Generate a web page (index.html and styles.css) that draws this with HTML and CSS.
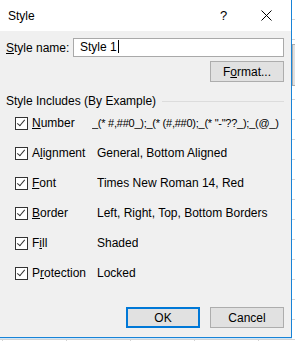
FILE: index.html
```html
<!DOCTYPE html>
<html lang="en">

<head>
    <meta charset="UTF-8">
    <meta name="viewport" content="width=device-width, initial-scale=1.0">
    <title>Style</title>
    <link rel="stylesheet" href="styles.css">
</head>

<body>
    <div class="sheet">
        <div class="peek"></div>
    </div>

    <div class="dialog">
        <div class="titlebar">
            <span class="title">Style</span>
            <span class="help">?</span>
            <svg class="close" width="11" height="11" viewBox="0 0 11 11">
                <path d="M0.5 0.5 L10.5 10.5 M10.5 0.5 L0.5 10.5" stroke="#000" stroke-width="1" fill="none" />
            </svg>
        </div>

        <div class="content">
            <div class="name-row">
                <label class="name-label"><u>S</u>tyle name:</label>
                <div class="name-input">Style 1<span class="caret"></span></div>
            </div>
            <div class="format-row">
                <button class="btn">F<u>o</u>rmat...</button>
            </div>

            <div class="group-head">
                <span>Style Includes (By Example)</span>
                <div class="rule"></div>
            </div>

            <div class="items">
                <div class="item">
                    <span class="check"></span>
                    <span class="item-name"><u>N</u>umber</span>
                    <span class="item-value shifted">_(* #,##0_);_(* (#,##0);_(* "-"??_);_(@_)</span>
                </div>
                <div class="item">
                    <span class="check"></span>
                    <span class="item-name">A<u>l</u>ignment</span>
                    <span class="item-value">General, Bottom Aligned</span>
                </div>
                <div class="item">
                    <span class="check"></span>
                    <span class="item-name"><u>F</u>ont</span>
                    <span class="item-value">Times New Roman 14, Red</span>
                </div>
                <div class="item">
                    <span class="check"></span>
                    <span class="item-name"><u>B</u>order</span>
                    <span class="item-value">Left, Right, Top, Bottom Borders</span>
                </div>
                <div class="item">
                    <span class="check"></span>
                    <span class="item-name">F<u>i</u>ll</span>
                    <span class="item-value">Shaded</span>
                </div>
                <div class="item">
                    <span class="check"></span>
                    <span class="item-name">P<u>r</u>otection</span>
                    <span class="item-value">Locked</span>
                </div>
            </div>

            <div class="actions">
                <button class="btn default">OK</button>
                <button class="btn">Cancel</button>
            </div>
        </div>
    </div>
</body>

</html>
```

FILE: styles.css
```css
body {
    margin: 0;
    width: 295px;
    height: 341px;
    overflow: hidden;
    position: relative;
    font-family: "Liberation Sans", Arial, sans-serif;
    font-size: 12px;
    color: #000;
    background: #fff;
}

/* spreadsheet behind the dialog */
.sheet {
    position: absolute;
    inset: 0;
    background-image:
        repeating-linear-gradient(to right, transparent 0 2px, #d4d4d4 2px 3px, transparent 3px 64px),
        repeating-linear-gradient(to bottom, transparent 0 19px, #d4d4d4 19px 20px);
}

.peek {
    position: absolute;
    left: 292px;
    top: 44px;
    width: 10px;
    height: 40px;
    background: #e1e1e1;
    border: 1px solid #adadad;
}

.dialog {
    position: absolute;
    left: 0;
    top: 0;
    width: 291px;
    height: 337px;
    background: #f0f0f0;
    border-right: 1px solid #1883d7;
    border-bottom: 1px solid #1883d7;
    box-shadow: 0 1px 0 #cfe6f8;
}

.titlebar {
    height: 31px;
    background: #fff;
    display: flex;
    align-items: center;
    padding-left: 8px;
}

.title {
    flex: 1;
    font-size: 12px;
}

.help {
    width: 10px;
    margin-right: 31px;
    font-size: 13px;
}

.close {
    margin-right: 19px;
}

.content {
    padding: 7px 7px 0 6px;
}

.name-row {
    display: flex;
    align-items: center;
}

.name-label {
    width: 67px;
}

.name-input {
    width: 203px;
    height: 17px;
    line-height: 17px;
    padding-left: 6px;
    background: #fff;
    border: 1px solid #a9a9a9;
}

.caret {
    display: inline-block;
    width: 1px;
    height: 13px;
    margin-left: 1px;
    vertical-align: -2px;
    background: #000;
}

.format-row {
    display: flex;
    justify-content: flex-end;
    margin-top: 4px;
}

.btn {
    width: 74px;
    height: 21px;
    padding: 0;
    font-family: inherit;
    font-size: 12px;
    color: #000;
    background: #e1e1e1;
    border: 1px solid #adadad;
}

.btn.default {
    border: 2px solid #0078d7;
}

.group-head {
    display: flex;
    align-items: center;
    height: 14px;
    margin-top: 12px;
}

.rule {
    flex: 1;
    height: 1px;
    margin-left: 6px;
    background: #dcdcdc;
}

.items {
    display: flex;
    flex-direction: column;
}

.item {
    display: flex;
    align-items: center;
    height: 30px;
    padding-left: 9px;
    white-space: nowrap;
}

.check {
    flex-shrink: 0;
    position: relative;
    width: 11px;
    height: 11px;
    border: 1px solid #333;
    background: #fff;
    margin-right: 4px;
}

.check::after {
    content: "";
    position: absolute;
    left: 3px;
    top: 0px;
    width: 3px;
    height: 7px;
    border-right: 1px solid #333;
    border-bottom: 1px solid #333;
    transform: rotate(40deg);
}

.item-name {
    flex-shrink: 0;
    width: 65px;
}

.item-value {
    overflow: hidden;
}

.item-value.shifted {
    margin-left: -5px;
    font-size: 11px;
    letter-spacing: -0.25px;
}

.actions {
    display: flex;
    justify-content: flex-end;
    gap: 10px;
    margin-top: 19px;
}
```
